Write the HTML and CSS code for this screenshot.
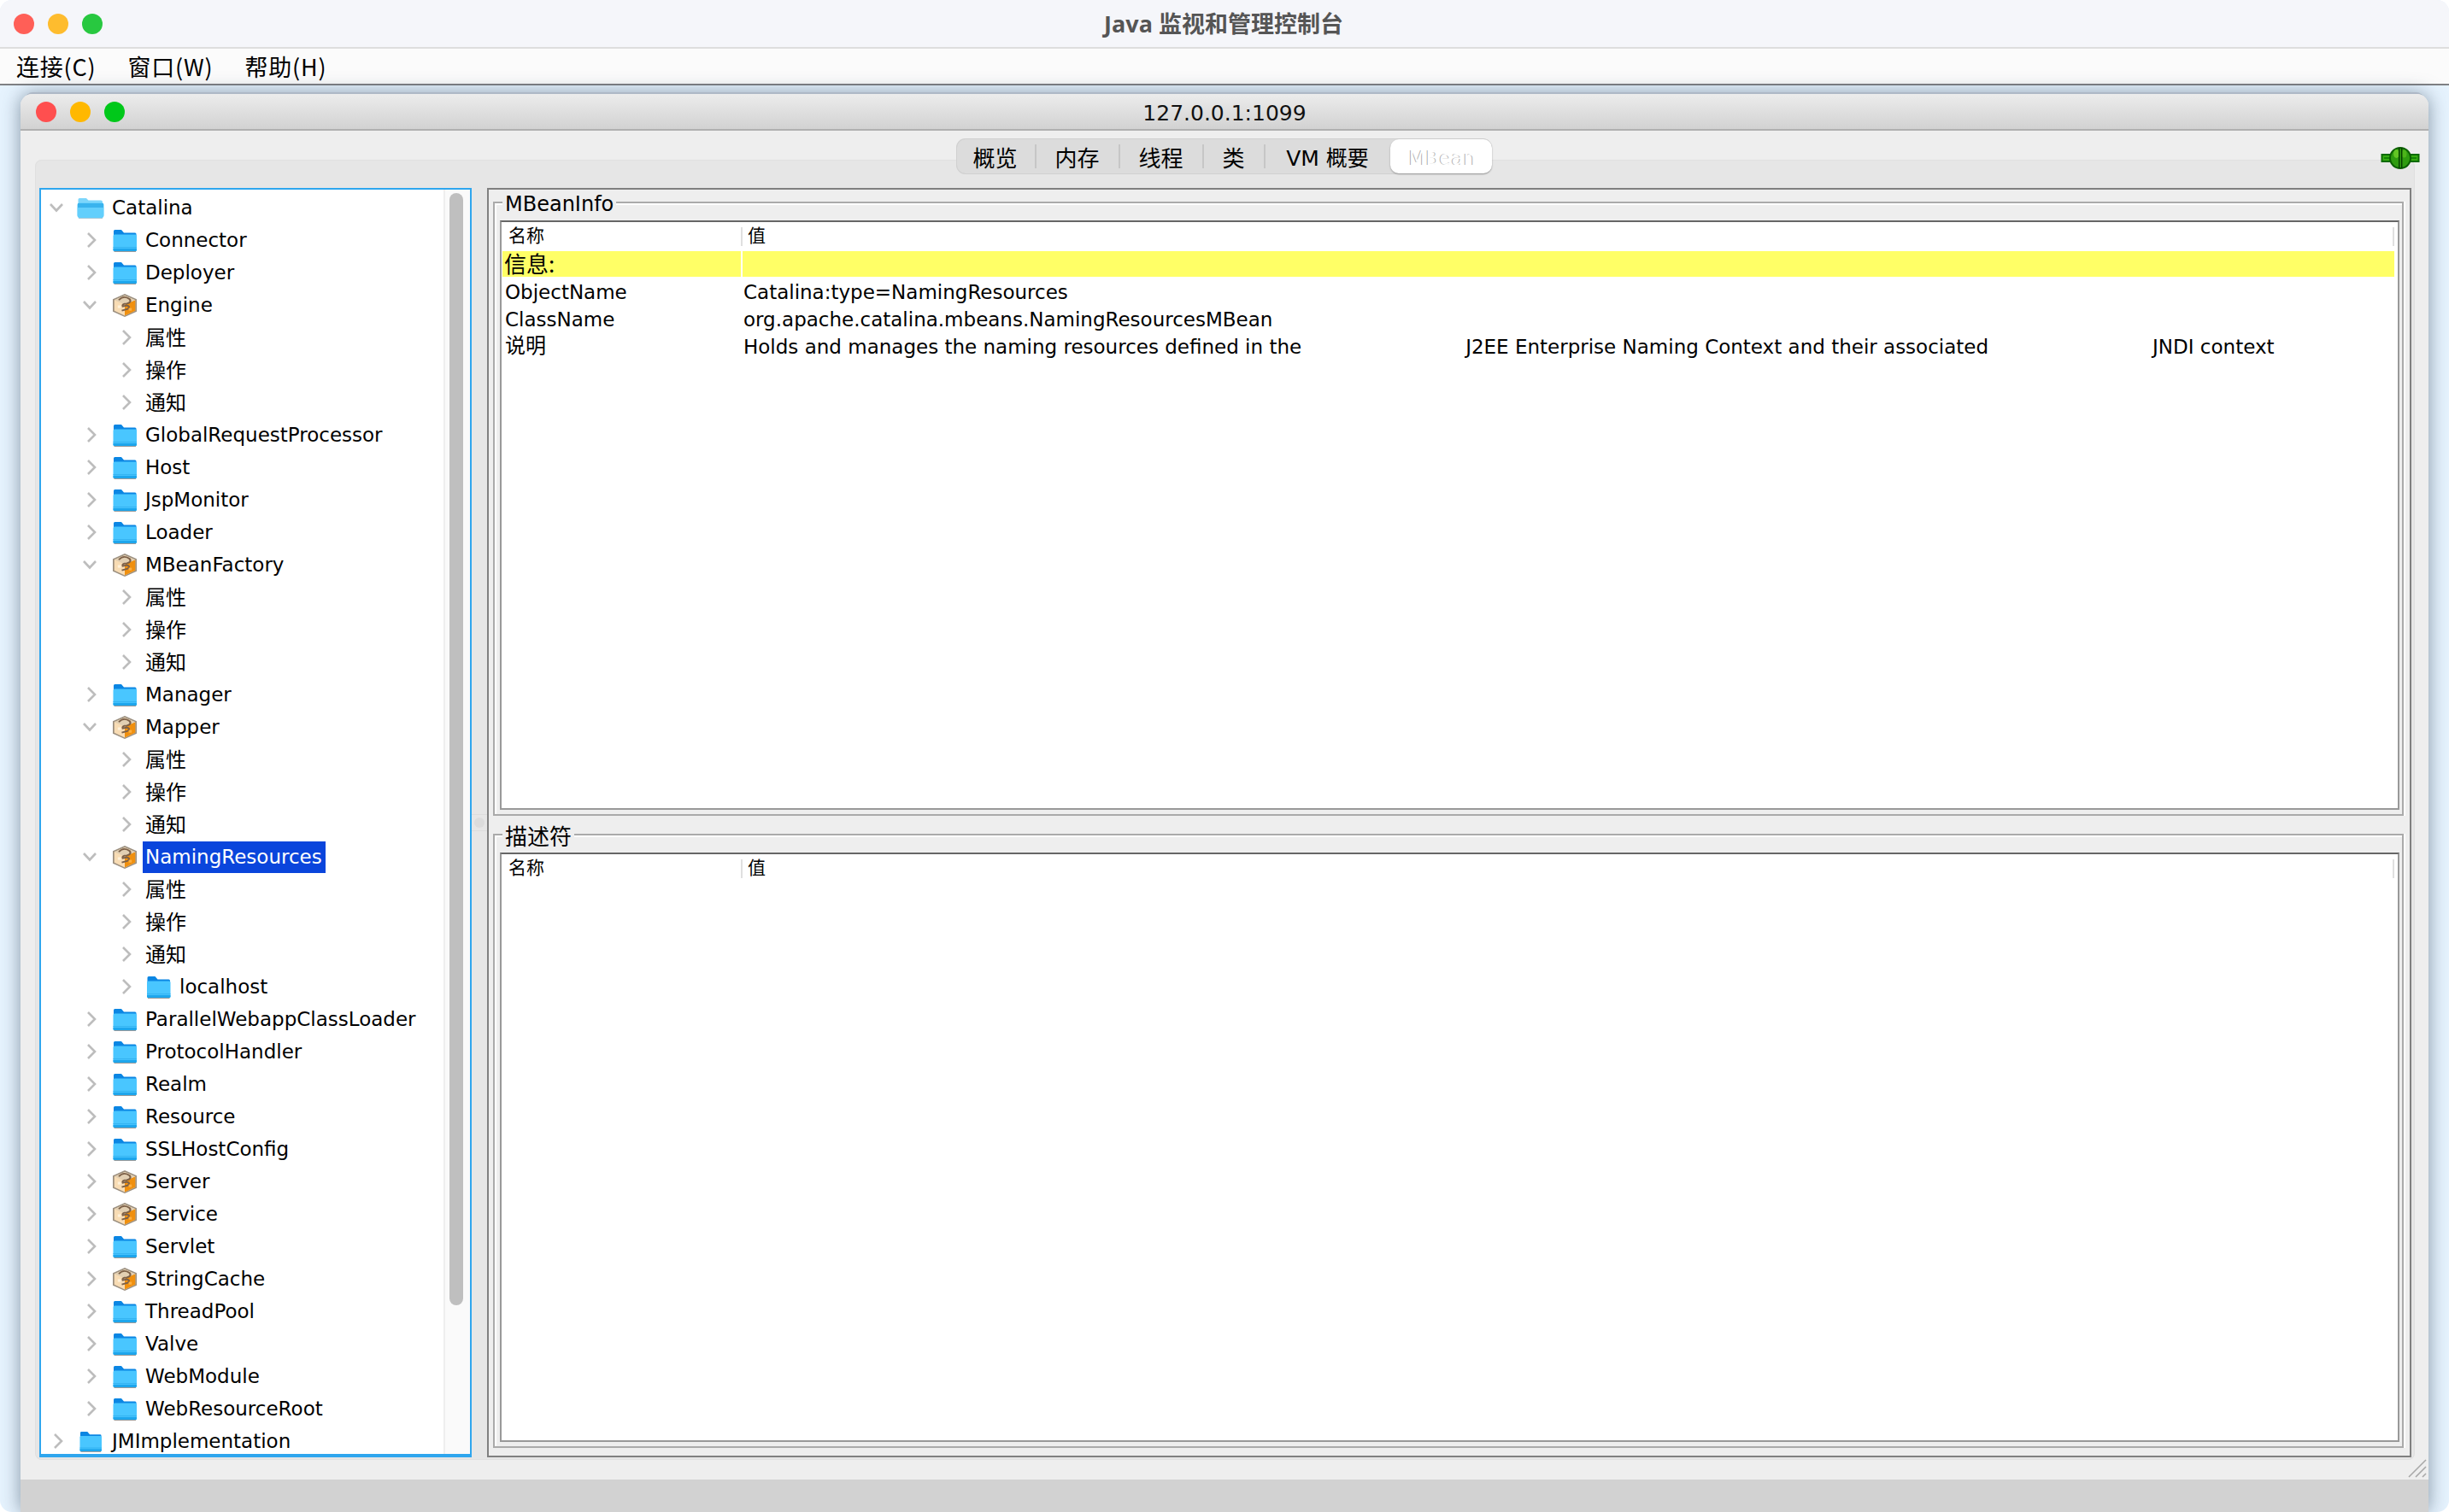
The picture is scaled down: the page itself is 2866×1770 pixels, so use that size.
FILE: index.html
```html
<!DOCTYPE html>
<html lang="zh-CN">
<head>
  <meta charset="UTF-8" />
  <title>Java 监视和管理控制台</title>
  <link rel="stylesheet" href="styles.css">
</head>
<body>
  <!-- Shared icons -->
  <svg class="defs" width="0" height="0">
    <symbol id="right" viewBox="0 0 20 20"><path d="M8 2 L16 10 L8 18" fill="none" stroke="#bdbdbd" stroke-width="2.6"/></symbol>
    <symbol id="down" viewBox="0 0 20 20"><path d="M3 6 L10 13.5 L17 6" fill="none" stroke="#bdbdbd" stroke-width="2.6"/></symbol>
    <symbol id="folder" viewBox="0 0 28 27">
      <path d="M1 25 V2.5 Q1 1 2.5 1 H10 L13 4.5 H26 Q27.5 4.5 27.5 6 V25 Z" fill="#0b86e3"/>
      <path d="M0.5 8 Q0.5 6.5 2 6.5 H26.5 Q28 6.5 28 8 V24.5 Q28 26 26.5 26 H2 Q0.5 26 0.5 24.5 Z" fill="#49c6ff"/>
      <rect x="0.5" y="21" width="27.5" height="1.2" fill="#35b4f2"/>
      <path d="M0.5 23 H28 V24.5 Q28 26 26.5 26 H2 Q0.5 26 0.5 24.5 Z" fill="#1ea6ec"/>
      <rect x="1.5" y="26" width="25.5" height="1" fill="#9a9a9a"/>
    </symbol>
    <symbol id="folder-open" viewBox="0 0 32 25">
      <path d="M1.5 22 V2.5 Q1.5 1 3 1 H11 L13.5 3.5 H28 Q30 3.5 30 5.5 V22 Z" fill="#7dd6fb"/>
      <path d="M0.5 9 Q0.5 6.5 3 6.5 H29 Q31.5 6.5 31.5 9 V21 Q31.5 24 28.5 24 H3.5 Q0.5 24 0.5 21 Z" fill="#5ccbfb"/>
      <path d="M1 7 H31 V13 H1 Z" fill="#39b3ee"/>
      <path d="M0.8 12 H31.2 V21 Q31.2 24 28.5 24 H3.5 Q0.8 24 0.8 21 Z" fill="#63cffc"/>
      <rect x="2" y="24" width="28" height="1" fill="#a8c8d8"/>
    </symbol>
    <symbol id="bean" viewBox="2 1 24 26" preserveAspectRatio="none">
      <path d="M14 1 L26 7 V21 L14 27 L2 21 V7 Z" fill="#9c9080"/>
      <path d="M14 3 L24.5 8 V20 L14 25.5 L3.5 20 V8 Z" fill="#f8dcb4"/>
      <path d="M24.5 8 V20 L14 25.5 V13 Z" fill="#f0900f"/>
      <path d="M14 3 L24.5 8 L14 13 L3.5 8 Z" fill="#e2cfb2"/>
      <path d="M8 8 Q13 2 19 7 Q21 11 16 12 Q11 12 12 15 L16 14 Q20 15 17 18 L11 20" fill="none" stroke="#7c6048" stroke-width="1.8"/>
      <rect x="7" y="14" width="3" height="3" fill="#fff0d8"/>
      <rect x="18" y="17" width="3" height="3" fill="#ffb040"/>
    </symbol>
  </svg>

  <div class="frame">
    <header class="app-title">
      <span class="lights">
        <i class="light red"></i><i class="light amber"></i><i class="light green"></i>
      </span>
      <span class="app-name">Java 监视和管理控制台</span>
    </header>

    <nav class="menubar">
      <a>连接(C)</a>
      <a>窗口(W)</a>
      <a>帮助(H)</a>
    </nav>

    <div class="desktop">
      <div class="window">
        <div class="win-title">
          <span class="lights inner">
            <i class="light red"></i><i class="light amber"></i><i class="light green"></i>
          </span>
          <span class="win-name">127.0.0.1:1099</span>
        </div>

        <div class="win-body">
          <!-- Tabs -->
          <div class="tabs">
            <span class="tab t1">概览</span>
            <span class="tab t1">内存</span>
            <span class="tab t1">线程</span>
            <span class="tab t2">类</span>
            <span class="tab t3">VM 概要</span>
            <span class="tab active">MBean</span>
          </div>

          <div class="panel">
            <svg class="plug" viewBox="0 0 46 26">
              <rect x="0.5" y="8" width="45" height="10" fill="#0b6a00"/>
              <rect x="2.5" y="10" width="41" height="6" fill="#35ac12"/>
              <rect x="4" y="12.2" width="38" height="1.6" fill="#0b7a00"/>
              <circle cx="23" cy="13" r="13" fill="#0a6000"/>
              <circle cx="23" cy="13" r="11" fill="#2f9c10"/>
              <ellipse cx="18.5" cy="8" rx="3.5" ry="5" fill="#62c624"/>
              <ellipse cx="27.5" cy="8" rx="3" ry="4.5" fill="#4cb41a"/>
              <rect x="21" y="1" width="1.4" height="24" fill="#043c00"/>
              <rect x="24" y="1" width="1.4" height="24" fill="#043c00"/>
            </svg>

            <!-- MBean tree -->
            <div class="tree">
              <ul class="tree-list">
                <li class="row l0"><svg class="tw"><use href="#down"/></svg><svg class="ic-root"><use href="#folder-open"/></svg><span>Catalina</span></li>
                <li class="row l1"><svg class="tw"><use href="#right"/></svg><svg class="ic"><use href="#folder"/></svg><span>Connector</span></li>
                <li class="row l1"><svg class="tw"><use href="#right"/></svg><svg class="ic"><use href="#folder"/></svg><span>Deployer</span></li>
                <li class="row l1"><svg class="tw"><use href="#down"/></svg><svg class="ic"><use href="#bean"/></svg><span>Engine</span></li>
                <li class="row l2"><svg class="tw"><use href="#right"/></svg><span class="zh">属性</span></li>
                <li class="row l2"><svg class="tw"><use href="#right"/></svg><span class="zh">操作</span></li>
                <li class="row l2"><svg class="tw"><use href="#right"/></svg><span class="zh">通知</span></li>
                <li class="row l1"><svg class="tw"><use href="#right"/></svg><svg class="ic"><use href="#folder"/></svg><span>GlobalRequestProcessor</span></li>
                <li class="row l1"><svg class="tw"><use href="#right"/></svg><svg class="ic"><use href="#folder"/></svg><span>Host</span></li>
                <li class="row l1"><svg class="tw"><use href="#right"/></svg><svg class="ic"><use href="#folder"/></svg><span>JspMonitor</span></li>
                <li class="row l1"><svg class="tw"><use href="#right"/></svg><svg class="ic"><use href="#folder"/></svg><span>Loader</span></li>
                <li class="row l1"><svg class="tw"><use href="#down"/></svg><svg class="ic"><use href="#bean"/></svg><span>MBeanFactory</span></li>
                <li class="row l2"><svg class="tw"><use href="#right"/></svg><span class="zh">属性</span></li>
                <li class="row l2"><svg class="tw"><use href="#right"/></svg><span class="zh">操作</span></li>
                <li class="row l2"><svg class="tw"><use href="#right"/></svg><span class="zh">通知</span></li>
                <li class="row l1"><svg class="tw"><use href="#right"/></svg><svg class="ic"><use href="#folder"/></svg><span>Manager</span></li>
                <li class="row l1"><svg class="tw"><use href="#down"/></svg><svg class="ic"><use href="#bean"/></svg><span>Mapper</span></li>
                <li class="row l2"><svg class="tw"><use href="#right"/></svg><span class="zh">属性</span></li>
                <li class="row l2"><svg class="tw"><use href="#right"/></svg><span class="zh">操作</span></li>
                <li class="row l2"><svg class="tw"><use href="#right"/></svg><span class="zh">通知</span></li>
                <li class="row l1"><svg class="tw"><use href="#down"/></svg><svg class="ic"><use href="#bean"/></svg><span class="selected">NamingResources</span></li>
                <li class="row l2"><svg class="tw"><use href="#right"/></svg><span class="zh">属性</span></li>
                <li class="row l2"><svg class="tw"><use href="#right"/></svg><span class="zh">操作</span></li>
                <li class="row l2"><svg class="tw"><use href="#right"/></svg><span class="zh">通知</span></li>
                <li class="row l2"><svg class="tw"><use href="#right"/></svg><svg class="ic-root sub"><use href="#folder"/></svg><span>localhost</span></li>
                <li class="row l1"><svg class="tw"><use href="#right"/></svg><svg class="ic"><use href="#folder"/></svg><span>ParallelWebappClassLoader</span></li>
                <li class="row l1"><svg class="tw"><use href="#right"/></svg><svg class="ic"><use href="#folder"/></svg><span>ProtocolHandler</span></li>
                <li class="row l1"><svg class="tw"><use href="#right"/></svg><svg class="ic"><use href="#folder"/></svg><span>Realm</span></li>
                <li class="row l1"><svg class="tw"><use href="#right"/></svg><svg class="ic"><use href="#folder"/></svg><span>Resource</span></li>
                <li class="row l1"><svg class="tw"><use href="#right"/></svg><svg class="ic"><use href="#folder"/></svg><span>SSLHostConfig</span></li>
                <li class="row l1"><svg class="tw"><use href="#right"/></svg><svg class="ic"><use href="#bean"/></svg><span>Server</span></li>
                <li class="row l1"><svg class="tw"><use href="#right"/></svg><svg class="ic"><use href="#bean"/></svg><span>Service</span></li>
                <li class="row l1"><svg class="tw"><use href="#right"/></svg><svg class="ic"><use href="#folder"/></svg><span>Servlet</span></li>
                <li class="row l1"><svg class="tw"><use href="#right"/></svg><svg class="ic"><use href="#bean"/></svg><span>StringCache</span></li>
                <li class="row l1"><svg class="tw"><use href="#right"/></svg><svg class="ic"><use href="#folder"/></svg><span>ThreadPool</span></li>
                <li class="row l1"><svg class="tw"><use href="#right"/></svg><svg class="ic"><use href="#folder"/></svg><span>Valve</span></li>
                <li class="row l1"><svg class="tw"><use href="#right"/></svg><svg class="ic"><use href="#folder"/></svg><span>WebModule</span></li>
                <li class="row l1"><svg class="tw"><use href="#right"/></svg><svg class="ic"><use href="#folder"/></svg><span>WebResourceRoot</span></li>
                <li class="row l0"><svg class="tw"><use href="#right"/></svg><svg class="ic-root"><use href="#folder"/></svg><span>JMImplementation</span></li>
              </ul>
              <div class="scrollbar"><div class="thumb"></div></div>
            </div>

            <!-- Split divider -->
            <div class="splitter"><i class="grip"></i></div>

            <!-- Details -->
            <div class="details">
              <fieldset class="pane first">
                <legend>MBeanInfo</legend>
                <div class="info-table">
                  <div class="grid-row head"><span>名称</span><span>值</span></div>
                  <div class="grid-row heading"><span>信息:</span><span></span></div>
                  <div class="grid-row"><span>ObjectName</span><span>Catalina:type=NamingResources</span></div>
                  <div class="grid-row"><span>ClassName</span><span>org.apache.catalina.mbeans.NamingResourcesMBean</span></div>
                  <div class="grid-row"><span class="zh">说明</span>
                    <span class="desc">
                      <span>Holds and manages the naming resources defined in the</span>
                      <span>J2EE Enterprise Naming Context and their associated</span>
                      <span>JNDI context</span>
                    </span>
                  </div>
                </div>
              </fieldset>

              <fieldset class="pane second">
                <legend>描述符</legend>
                <div class="info-table">
                  <div class="grid-row head"><span>名称</span><span>值</span></div>
                </div>
              </fieldset>
            </div>
          </div>

          <svg class="resize" viewBox="0 0 22 22">
            <path d="M1 21 L21 1 M9 21 L21 9 M17 21 L21 17" stroke="#a8a8a8" stroke-width="1.6" fill="none"/>
          </svg>
        </div>

        <div class="win-foot"></div>
      </div>
    </div>
  </div>
</body>
</html>
```

FILE: styles.css
```css
* {
  box-sizing: border-box;
}
html, body {
  height: 100%;
}
body {
  margin: 0;
  background: #fff;
  font-family: "DejaVu Sans", "Noto Sans CJK SC", sans-serif;
  font-size: 23px;
  color: #000;
  overflow: hidden;
}
.defs {
  position: absolute;
}
.frame {
  height: 100%;
  display: flex;
  flex-direction: column;
  border-radius: 14px;
  overflow: hidden;
  background: #e6f3fe;
}

/* Top title bar */
.app-title {
  height: 57px;
  flex: none;
  display: flex;
  align-items: center;
  justify-content: center;
  position: relative;
  padding-bottom: 3px;
  background: #f5f6fa;
  border-bottom: 2px solid #dedede;
}
.app-name {
  font-family: "Open Sans", "Noto Sans CJK SC", sans-serif;
  font-size: 27px;
  font-weight: 700;
  color: #555;
  margin-left: -2px;
}
.lights {
  position: absolute;
  left: 16px;
  top: 16px;
  display: flex;
  gap: 16px;
}
.lights.inner {
  left: 18px;
  top: 9px;
}
.light {
  width: 24px;
  height: 24px;
  border-radius: 50%;
}
.red { background: #ff5f57; }
.amber { background: #febc2e; }
.green { background: #28c840; }
.inner .red { background: #ff4f4f; }
.inner .amber { background: #ffb800; }
.inner .green { background: #00c81a; }

/* Menu */
.menubar {
  height: 43px;
  flex: none;
  display: flex;
  gap: 37px;
  align-items: center;
  padding-left: 19px;
  background: #fbfbfb;
  border-bottom: 2px solid #7f8184;
  font-family: "Noto Sans CJK SC", sans-serif;
  font-size: 27px;
  letter-spacing: 0.8px;
}

/* Inner window */
.desktop {
  flex: 1;
  min-height: 0;
  display: flex;
  padding: 10px 24px 0;
}
.window {
  flex: 1;
  display: flex;
  flex-direction: column;
  border-radius: 14px 14px 0 0;
  background: #eee;
  box-shadow: 0 -8px 0 -6px #aeb8c6, 0 0 22px rgba(50, 70, 90, 0.55);
}
.win-title {
  height: 43px;
  flex: none;
  position: relative;
  display: flex;
  align-items: center;
  justify-content: center;
  border-radius: 14px 14px 0 0;
  background: linear-gradient(#ececec, #d2d2d2);
  border-bottom: 2px solid #b0b0b0;
}
.win-name {
  font-size: 25px;
  color: #111;
  margin-top: 3px;
}
.win-body {
  flex: 1;
  min-height: 0;
  position: relative;
  display: flex;
  flex-direction: column;
  padding: 9px 16px 23px 17px;
  background: #eee;
}
.win-foot {
  height: 38px;
  flex: none;
  background: #d2d2d2;
}

/* Tabs */
.tabs {
  height: 42px;
  flex: none;
  align-self: center;
  position: relative;
  z-index: 2;
  margin: 0 0 -17px -3px;
  display: flex;
  align-items: center;
  border-radius: 11px;
  background: #dcdcdc;
  box-shadow: inset 0 0 0 1px #d0d0d0;
  font-family: "Noto Sans CJK SC", sans-serif;
  font-size: 26px;
}
.tab {
  height: 28px;
  display: flex;
  align-items: center;
  justify-content: center;
  border-right: 2px solid #c6c6c6;
}
.t1 {
  width: 98px;
}
.t1:first-child {
  width: 94px;
}
.t2 {
  width: 72px;
}
.t3 {
  width: 146px;
  border-right: 0;
  font-family: "DejaVu Sans", "Noto Sans CJK SC", sans-serif;
  font-size: 25px;
}
.tab.active {
  width: 119px;
  height: 40px;
  padding: 3px 0 0 4px;
  border-right: 0;
  border-radius: 10px;
  background: #fff;
  box-shadow: 0 1px 2px rgba(0, 0, 0, 0.3);
  font-family: "DejaVu Sans", sans-serif;
  font-size: 23px;
  color: #fff;
  text-shadow: -1px 0 0 #aaa;
}

/* Panel under the tabs */
.panel {
  flex: 1;
  min-height: 0;
  position: relative;
  display: flex;
  padding: 33px 4px 3px 5px;
  background: #e6e6e6;
  border-radius: 8px;
  box-shadow: inset 0 0 0 1px #e0e0e0;
}
.plug {
  position: absolute;
  right: -6px;
  top: -15px;
  width: 46px;
  height: 26px;
}

/* Tree */
.tree {
  width: 506px;
  flex: none;
  display: flex;
  overflow: hidden;
  background: #fff;
  border: 2px solid #2fa6ee;
  border-bottom-width: 4px;
}
.tree-list {
  flex: 1;
  min-width: 0;
  margin: 0;
  padding: 2px 0 0;
  list-style: none;
}
.row {
  height: 38px;
  display: flex;
  align-items: center;
  white-space: nowrap;
}
.l0 { padding-left: 8px; }
.l1 { padding-left: 47px; }
.l2 { padding-left: 88px; }
.tw {
  width: 20px;
  height: 20px;
  flex: none;
}
.ic-root {
  width: 32px;
  height: 25px;
  flex: none;
  margin: 0 9px 0 14px;
}
.ic-root.sub {
  width: 31px;
  height: 27px;
  margin: 0 9px 0 14px;
}
.ic {
  width: 28px;
  height: 27px;
  flex: none;
  margin: 0 10px 0 17px;
}
.l2 > span {
  margin-left: 0;
}
.l2 > .tw + span {
  margin-left: 14px;
}
.zh {
  font-size: 24px;
  margin-bottom: 4px;
}
.selected {
  background: #0a45dc;
  color: #fff;
  height: 37px;
  display: flex;
  align-items: center;
  padding: 0 4px 0 3px;
  margin-left: -3px;
}
.scrollbar {
  width: 31px;
  flex: none;
  padding: 4px 8px 0 5px;
  background: #fafafa;
  border-left: 2px solid #eee;
}
.thumb {
  height: 1302px;
  border-radius: 8px;
  background: #bfbfbf;
}

/* Divider */
.splitter {
  width: 18px;
  flex: none;
  position: relative;
}
.grip {
  position: absolute;
  left: 0;
  right: 0;
  top: 733px;
  height: 20px;
  border-top: 1px solid #ddd;
  border-bottom: 1px solid #ddd;
}
.grip::after {
  content: "";
  position: absolute;
  left: 3px;
  top: 3px;
  width: 12px;
  height: 12px;
  border-radius: 50%;
  background: #dcdcdc;
}

/* Right side */
.details {
  flex: 1;
  min-width: 0;
  display: flex;
  flex-direction: column;
  gap: 7px;
  padding: 0 7px 9px 5px;
  background: #eee;
  border: 2px solid #808080;
}
.pane {
  display: flex;
  flex-direction: column;
  min-width: 0;
  margin: 0;
  padding: 0 3px 5px 6px;
  border: 2px solid #aaa;
  box-shadow: inset 2px 2px 0 #fff, 2px 0 0 #fff;
}
.pane.first {
  height: 733px;
  flex: none;
}
.pane.second {
  flex: 1;
}
legend {
  margin-left: 3px;
  padding: 0 3px;
  height: 30px;
  line-height: 34px;
  background: #eee;
  font-size: 24px;
}
.first legend {
  margin-bottom: 6px;
}
.second legend {
  margin-bottom: 6px;
  font-size: 26px;
  line-height: 37px;
}
.info-table {
  flex: 1;
  min-height: 0;
  padding: 0 4px 0 1px;
  background: #fff;
  border: 2px solid #999;
  border-top-color: #666;
}
.first .info-table {
  flex: none;
  height: 690px;
}

/* Rows of the table */
.grid-row {
  display: grid;
  grid-template-columns: 279px 1fr;
  grid-template-rows: 100%;
  column-gap: 2px;
  height: 32px;
  align-items: center;
  font-size: 23px;
  line-height: 26px;
  white-space: nowrap;
}
.grid-row > span:first-child {
  padding-left: 3px;
}
.grid-row > span:last-child {
  padding-left: 1px;
}
.grid-row > .zh {
  margin-bottom: 2px;
}
.head {
  height: 34px;
  grid-template-rows: auto;
  padding-top: 3px;
  align-items: start;
  font-size: 21px;
  font-family: "Noto Sans CJK SC", sans-serif;
}
.head > span {
  height: 22px;
  margin-top: 3px;
  line-height: 16px;
}
.head > span:first-child {
  padding-left: 7px;
  border-right: 2px solid #e0e0e0;
  margin-right: -2px;
}
.head > span:last-child {
  padding-left: 6px;
  border-right: 2px solid #e0e0e0;
}
.heading {
  height: 32px;
  padding-bottom: 5px;
  background: linear-gradient(#ffff66, #ffff66) 0 0 / 279px 30px no-repeat,
    linear-gradient(#ffff66, #ffff66) 281px 0 / 100% 30px no-repeat;
  font-family: "Noto Sans CJK SC", sans-serif;
  font-size: 26px;
}
.heading > span:first-child {
  padding-left: 2px;
}
.desc {
  display: flex;
  gap: 192px;
}
.resize {
  position: absolute;
  right: 2px;
  bottom: 2px;
  width: 22px;
  height: 22px;
}
```
